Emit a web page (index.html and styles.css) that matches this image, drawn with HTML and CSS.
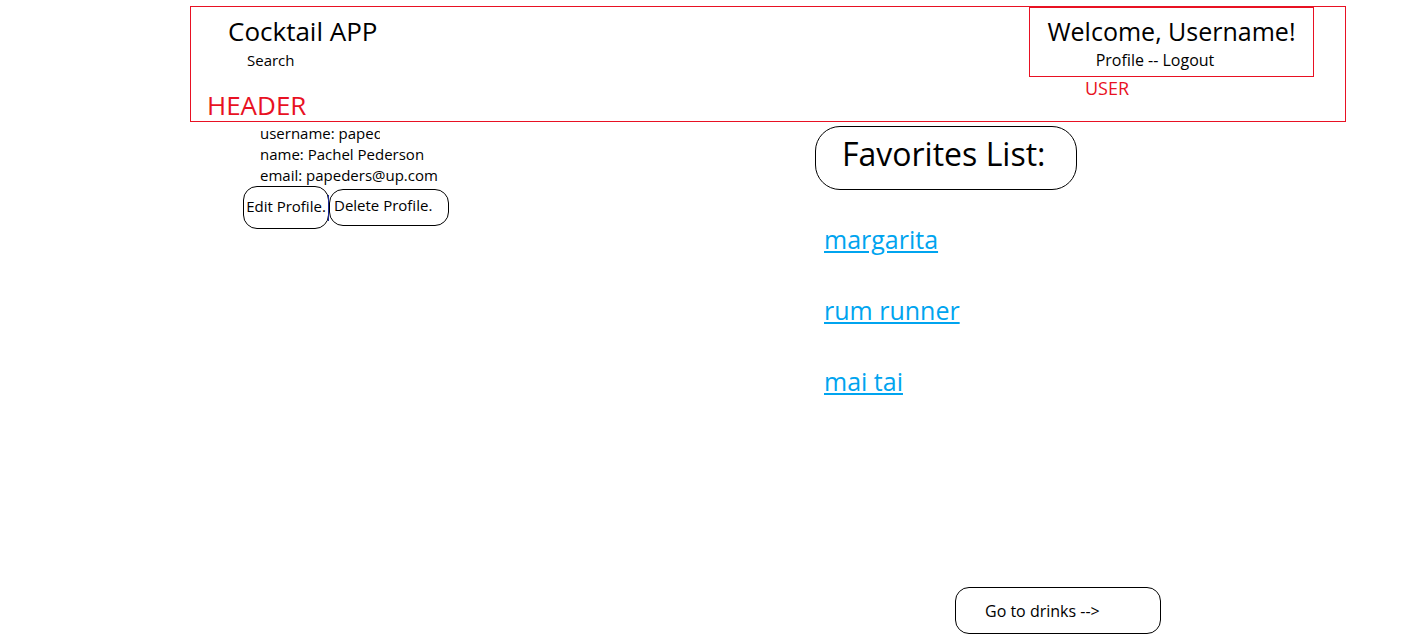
FILE: index.html
```html
<!DOCTYPE html>
<html>
<head>
<meta charset="utf-8">
<link rel="stylesheet" href="styles.css">
</head>
<body>
<header class="header">
  <div class="brand">
    <div class="title">Cocktail APP</div>
    <div class="search">Search</div>
    <div class="label header-label">HEADER</div>
  </div>
  <div class="user-col">
    <div class="user-box">
      <div class="welcome">Welcome, Username!</div>
      <div class="user-links">Profile -- Logout</div>
    </div>
    <div class="label user-label">USER</div>
  </div>
</header>
<main class="main">
  <section class="profile">
    <div class="info">
      <div class="info-line clip">username: papeders</div>
      <div class="info-line">name: Pachel Pederson</div>
      <div class="info-line">email: papeders@up.com</div>
    </div>
    <div class="actions">
      <button class="btn btn-edit">Edit Profile.</button><span class="caret"></span><button class="btn btn-delete">Delete Profile.</button>
    </div>
  </section>
  <section class="favorites">
    <div class="fav-title">Favorites List:</div>
    <ul class="fav-list">
      <li><a href="#">margarita</a></li>
      <li><a href="#">rum runner</a></li>
      <li><a href="#">mai tai</a></li>
    </ul>
    <button class="btn btn-go">Go to drinks --&gt;</button>
  </section>
</main>
</body>
</html>
```
FILE: styles.css
```css
* { box-sizing: border-box; }
body {
  margin: 0;
  font-family: "Open Sans", "Noto Sans", sans-serif;
  color: #000;
  background: #fff;
}
.header {
  margin: 6px 0 0 190px;
  width: 1156px;
  height: 116px;
  border: 1px solid #e81123;
  display: flex;
}
.brand {
  width: 838px;
}
.title {
  font-size: 26px;
  line-height: 32px;
  margin: 8px 0 0 37px;
}
.search {
  font-size: 15px;
  line-height: 20px;
  margin: 3px 0 0 56px;
}
.label {
  color: #e81123;
}
.header-label {
  font-size: 26px;
  line-height: 32px;
  margin: 19px 0 0 16px;
}
.user-col {
  display: flex;
  flex-direction: column;
}
.user-box {
  width: 285px;
  height: 70px;
  border: 1px solid #e81123;
  text-align: center;
}
.welcome {
  font-size: 25px;
  line-height: 32px;
  margin-top: 7px;
}
.user-links {
  font-size: 16px;
  line-height: 20px;
  margin-top: 3px;
  margin-left: -33px;
}
.user-label {
  font-size: 18px;
  line-height: 22px;
  margin: 0 0 0 56px;
}
.main {
  display: flex;
}
.profile {
  width: 572px;
  margin-left: 243px;
}
.info {
  padding-left: 17px;
  padding-top: 1px;
}
.info-line {
  font-size: 15px;
  line-height: 21px;
}
.clip {
  width: 120px;
  overflow: hidden;
  white-space: nowrap;
}
.actions {
  display: flex;
  align-items: flex-start;
}
.btn {
  font-family: inherit;
  background: #fff;
  color: #000;
  border: 1px solid #000;
  padding: 0;
  font-size: 15px;
  cursor: pointer;
}
.btn-edit {
  width: 86px;
  height: 43px;
  border-radius: 14px;
  padding-bottom: 3px;
}
.caret {
  width: 1px;
  height: 26px;
  margin: 9px 0 0 -1px;
  background: #1a2a9a;
}
.btn-delete {
  width: 120px;
  height: 37px;
  margin-top: 3px;
  border-radius: 14px;
  line-height: 30px;
  padding: 0 0 6px 4px;
  text-align: left;
}
.favorites {
  width: 400px;
  display: flex;
  flex-direction: column;
  align-items: flex-start;
}
.fav-title {
  width: 262px;
  height: 64px;
  margin-top: 4px;
  border: 1px solid #000;
  border-radius: 25px;
  font-size: 32px;
  line-height: 54px;
  padding-left: 26px;
}
.fav-list {
  list-style: none;
  margin: 32px 0 0 9px;
  padding: 0;
}
.fav-list li {
  font-size: 25px;
  line-height: 34px;
  margin-bottom: 37px;
}
.fav-list a {
  color: #00a4ef;
}
.btn-go {
  width: 206px;
  height: 47px;
  margin: 152px 0 0 140px;
  text-align: left;
  padding-left: 29px;
  font-size: 16px;
  border-radius: 14px;
}
```
